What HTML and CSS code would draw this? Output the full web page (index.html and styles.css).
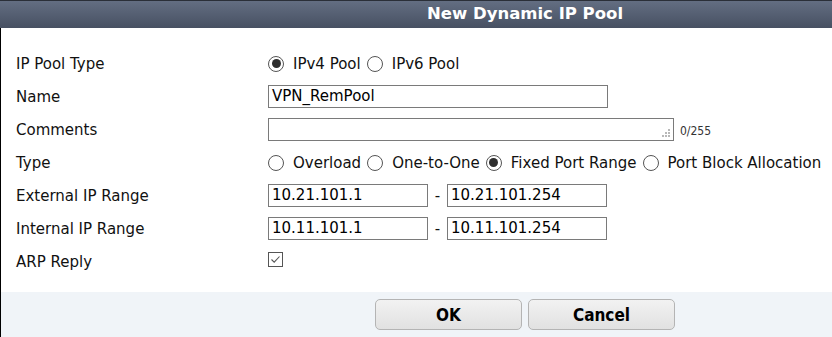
FILE: index.html
```html
<!DOCTYPE html>
<html>
<head>
<meta charset="utf-8">
<link rel="stylesheet" href="styles.css">
</head>
<body>
<div class="dialog">
  <div class="header">New Dynamic IP Pool</div>
  <div class="body">
    <div class="row">
      <div class="label">IP Pool Type</div>
      <div class="ctrl">
        <span class="radio on"></span><span class="opt">IPv4 Pool</span>
        <span class="radio"></span><span class="opt">IPv6 Pool</span>
      </div>
    </div>
    <div class="row">
      <div class="label">Name</div>
      <div class="ctrl"><div class="input name">VPN_RemPool</div></div>
    </div>
    <div class="row">
      <div class="label">Comments</div>
      <div class="ctrl">
        <div class="input comments">
          <svg class="grip" width="9" height="9" viewBox="0 0 9 9">
            <rect x="6" y="0" width="2" height="2" fill="#b8b8b8"/>
            <rect x="3" y="3" width="2" height="2" fill="#b8b8b8"/>
            <rect x="6" y="3" width="2" height="2" fill="#b8b8b8"/>
            <rect x="0" y="6" width="2" height="2" fill="#b8b8b8"/>
            <rect x="3" y="6" width="2" height="2" fill="#b8b8b8"/>
            <rect x="6" y="6" width="2" height="2" fill="#b8b8b8"/>
          </svg>
        </div>
        <span class="count">0/255</span>
      </div>
    </div>
    <div class="row">
      <div class="label">Type</div>
      <div class="ctrl">
        <span class="radio"></span><span class="opt">Overload</span>
        <span class="radio"></span><span class="opt">One-to-One</span>
        <span class="radio on"></span><span class="opt">Fixed Port Range</span>
        <span class="radio"></span><span class="opt">Port Block Allocation</span>
      </div>
    </div>
    <div class="row">
      <div class="label">External IP Range</div>
      <div class="ctrl">
        <div class="input ip">10.21.101.1</div><span class="dash">-</span><div class="input ip">10.21.101.254</div>
      </div>
    </div>
    <div class="row">
      <div class="label">Internal IP Range</div>
      <div class="ctrl">
        <div class="input ip">10.11.101.1</div><span class="dash">-</span><div class="input ip">10.11.101.254</div>
      </div>
    </div>
    <div class="row">
      <div class="label">ARP Reply</div>
      <div class="ctrl">
        <span class="check">
          <svg width="13" height="13" viewBox="0 0 13 13"><path d="M2.5 6.5 L5.2 9.2 L10.5 3.5" fill="none" stroke="#555" stroke-width="1.1"/></svg>
        </span>
      </div>
    </div>
  </div>
  <div class="footer">
    <button class="btn">OK</button>
    <button class="btn">Cancel</button>
  </div>
</div>
</body>
</html>
```

FILE: styles.css
```css
html, body {
  margin: 0;
  padding: 0;
  background: #fff;
}
.dialog {
  width: 832px;
  height: 337px;
  display: flex;
  flex-direction: column;
  font-family: "DejaVu Sans", sans-serif;
  font-size: 15px;
  color: #111;
}
.header {
  height: 28px;
  flex: none;
  background: linear-gradient(#636e82, #475062);
  border-top: 1px solid #2a2f38;
  box-sizing: border-box;
  color: #fff;
  font-family: "DejaVu Sans", sans-serif;
  font-weight: bold;
  font-size: 16.5px;
  line-height: 26px;
  text-align: center;
  padding-left: 218px;
}
.body {
  flex: 1;
  border-left: 1px solid #000;
  padding: 19px 0 0 15px;
}
.row {
  display: flex;
  align-items: center;
  height: 33px;
}
.label {
  width: 252px;
  flex: none;
}
.ctrl {
  display: flex;
  align-items: center;
}
.radio {
  width: 14px;
  height: 14px;
  border: 1px solid #555;
  border-radius: 50%;
  box-sizing: content-box;
  position: relative;
  margin-right: 9px;
  background: #fff;
  flex: none;
}
.radio.on::after {
  content: "";
  position: absolute;
  left: 2.5px;
  top: 2.5px;
  width: 9px;
  height: 9px;
  border-radius: 50%;
  background: #2e2e2e;
}
.opt {
  margin-right: 6px;
  white-space: nowrap;
}
.input {
  height: 23px;
  box-sizing: border-box;
  border: 1px solid #7a7a7a;
  padding: 0 3px;
  line-height: 21px;
  font-size: 15px;
  color: #000;
  background: #fff;
  overflow: hidden;
  white-space: nowrap;
}
.name {
  width: 340px;
}
.comments {
  width: 406px;
  position: relative;
}
.grip {
  position: absolute;
  right: 2px;
  bottom: 2px;
}
.count {
  font-family: "DejaVu Sans Condensed", "DejaVu Sans", sans-serif;
  font-size: 12px;
  color: #333;
  margin-left: 6px;
  margin-top: 2px;
}
.ip {
  width: 160px;
}
.dash {
  width: 19px;
  text-align: center;
}
.check {
  width: 15px;
  height: 15px;
  box-sizing: border-box;
  border: 1px solid #555;
  display: flex;
  align-items: center;
  justify-content: center;
  margin-top: -5px;
}
.footer {
  height: 45px;
  flex: none;
  background: #f0f4f8;
  border-left: 1px solid #000;
  display: flex;
  justify-content: flex-start;
  padding: 7px 0 0 374px;
  box-sizing: border-box;
  gap: 6px;
}
.btn {
  width: 147px;
  height: 31px;
  border: 1px solid #b4b4b4;
  border-radius: 5px;
  background: linear-gradient(#f2f2f2, #e1e1e1);
  font-family: "DejaVu Sans Condensed", "DejaVu Sans", sans-serif;
  font-weight: bold;
  font-size: 17px;
  color: #000;
  padding: 0;
}
```
